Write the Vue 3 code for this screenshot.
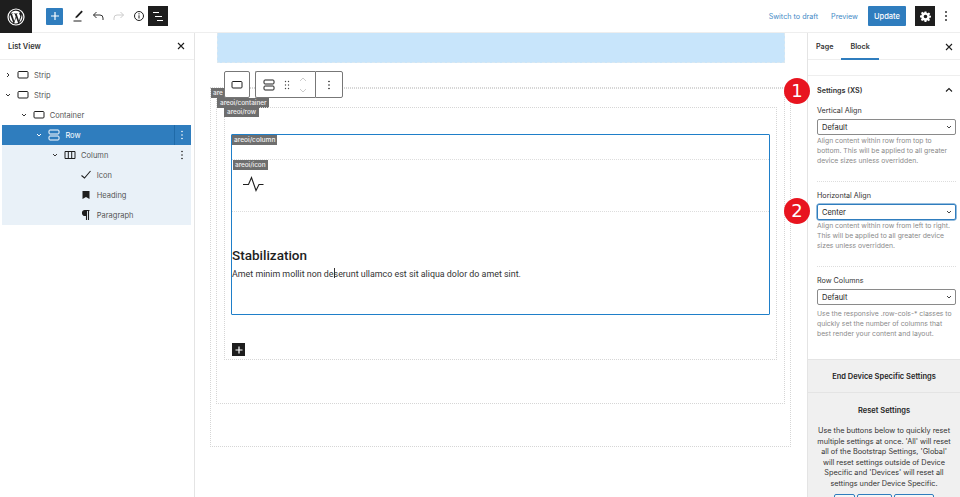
<script setup>
const tree = [
  { label: 'Strip', icon: 'box', depth: 0, caret: 'right' },
  { label: 'Strip', icon: 'box', depth: 0, caret: 'down' },
  { label: 'Container', icon: 'box', depth: 1, caret: 'down' },
  { label: 'Row', icon: 'row', depth: 2, caret: 'down', cls: 'sel', more: true },
  { label: 'Column', icon: 'col', depth: 3, caret: 'down', cls: 'tint', more: true },
  { label: 'Icon', icon: 'check', depth: 4, cls: 'tint' },
  { label: 'Heading', icon: 'mark', depth: 4, cls: 'tint' },
  { label: 'Paragraph', icon: 'para', depth: 4, cls: 'tint' }
]
</script>

<template>
  <div class="app">
    <header class="top">
      <div class="logo">
        <svg width="18" height="18" viewBox="0 0 18 18"><circle cx="9" cy="9" r="8" fill="none" stroke="#fff" stroke-width="1.2"/><path d="M2.6 9c0 2.6 1.5 4.8 3.7 5.8L3.2 6.4A6.4 6.4 0 0 0 2.600 9zM13.300 8.700c0-.8-.3-1.400-.5-1.800-.3-.5-.6-.9-.6-1.400 0-.5.4-1 1-1h.1A6.400 6.400 0 0 0 3.600 5.500h.4c.7 0 1.700-.1 1.700-.1.3 0 .4.500 0 .5 0 0-.3 0-.7.100l2.300 6.900 1.400-4.200-1-2.700c-.3 0-.7-.1-.7-.1-.3 0-.3-.5 0-.5 0 0 1 .1 1.700.1s1.700-.1 1.700-.1c.3 0 .4.500 0 .5 0 0-.3 0-.7.100l2.300 6.800.6-2.100c.3-.8.500-1.400.5-1.900zM9.100 9.600l-1.900 5.600a6.400 6.400 0 0 0 3.900-.1l-2-5.500zM14.600 6c.1.200.100.400.100.700 0 .6-.1 1.300-.5 2.200l-1.900 5.600A6.400 6.400 0 0 0 14.600 6z" fill="#fff"/></svg>
      </div>
      <div class="tools">
        <button class="add"><svg width="10" height="10" viewBox="0 0 10 10"><path d="M5 1v8M1 5h8" stroke="#fff" stroke-width="1.2"/></svg></button>
        <svg class="t-ic" width="12" height="14" viewBox="0 0 12 14"><path d="M9.500 1.500l1.300 1.300-5.500 5.700-2 .7.700-2z" fill="#1e1e1e"/><path d="M1.500 12h8" stroke="#1e1e1e" stroke-width="1"/></svg>
        <svg class="t-ic" width="12" height="10" viewBox="0 0 12 10"><path d="M4.500 1L1.500 4l3 3M1.500 4H8a3 3 0 0 1 3 3v2" fill="none" stroke="#333" stroke-width="1"/></svg>
        <svg class="t-ic" width="12" height="10" viewBox="0 0 12 10"><path d="M7.500 1l3 3-3 3M10.500 4H4a3 3 0 0 0-3 3v2" fill="none" stroke="#ccc" stroke-width="1"/></svg>
        <svg class="t-ic" width="12" height="12" viewBox="0 0 12 12"><circle cx="6" cy="6" r="4.500" fill="none" stroke="#1e1e1e" stroke-width="1"/><path d="M6 5.300v3.200M6 3.200v1.200" stroke="#1e1e1e" stroke-width="1"/></svg>
        <button class="listbtn"><svg width="12" height="11" viewBox="0 0 12 11"><path d="M1 1.500h6M3 5.500h7M5 9.500h6" stroke="#fff" stroke-width="1"/></svg></button>
      </div>
      <div class="actions">
        <a class="link l1">Switch to draft</a>
        <a class="link l2">Preview</a>
        <button class="update">Update</button>
        <button class="gear"><svg width="11" height="11" viewBox="0 0 24 24"><path fill="#fff" fill-rule="evenodd" d="M10 1h4l.7 3.200 1.900.8 2.800-1.800 2.800 2.800-1.800 2.800.8 1.900L24 10v4l-3.200.7-.8 1.900 1.800 2.800-2.800 2.800-2.800-1.800-1.900.8L14 24h-4l-.7-3.200-1.900-.8-2.800 1.800-2.800-2.800 1.800-2.800-.8-1.900L0 14v-4l3.200-.7.800-1.900-1.800-2.800 2.800-2.800 2.800 1.800 1.900-.8zM12 8a4 4 0 1 0 0 8 4 4 0 0 0 0-8z"/></svg></button>
        <svg class="kebab" width="4" height="12" viewBox="0 0 4 12"><circle cx="2" cy="2" r="1" fill="#333"/><circle cx="2" cy="6" r="1" fill="#333"/><circle cx="2" cy="10" r="1" fill="#333"/></svg>
      </div>
    </header>

    <div class="body">
      <aside class="list">
        <div class="list-head">
          <span>List View</span>
          <svg width="8" height="8" viewBox="0 0 8 8"><path d="M1 1l6 6M7 1L1 7" stroke="#1e1e1e" stroke-width="1.100"/></svg>
        </div>
        <div class="tree">
          <div v-for="(n, i) in tree" :key="i" class="node" :class="n.cls">
            <span class="indent" :style="{ width: n.depth * 15.7 + 'px' }"></span>
            <span class="caret">
              <svg v-if="n.caret === 'right'" width="6" height="6" viewBox="0 0 6 6"><path d="M2 1l2 2-2 2" fill="none" stroke="currentColor"/></svg>
              <svg v-else-if="n.caret === 'down'" width="6" height="6" viewBox="0 0 6 6"><path d="M1 2l2 2 2-2" fill="none" stroke="currentColor"/></svg>
            </span>
            <span class="ic">
              <svg v-if="n.icon === 'box'" width="12" height="10" viewBox="0 0 12 10"><rect x="1" y="1.500" width="10" height="6.500" rx="1" fill="none" stroke="currentColor"/></svg>
              <svg v-else-if="n.icon === 'row'" width="12" height="12" viewBox="0 0 12 12"><rect x="1" y="1" width="10" height="4" rx="1" fill="none" stroke="currentColor"/><rect x="1" y="7" width="10" height="4" rx="1" fill="none" stroke="currentColor"/></svg>
              <svg v-else-if="n.icon === 'col'" width="12" height="10" viewBox="0 0 12 10"><path d="M1 1.500h10v7H1zM4.300 1.500v7M7.700 1.500v7" fill="none" stroke="currentColor"/></svg>
              <svg v-else-if="n.icon === 'check'" width="12" height="10" viewBox="0 0 12 10"><path d="M1.500 5.500l3 2.500 6-7" fill="none" stroke="currentColor" stroke-width="1.100"/></svg>
              <svg v-else-if="n.icon === 'mark'" width="12" height="10" viewBox="0 0 12 10"><path d="M2.500 1h7v8L6 7 2.500 9z" fill="currentColor"/></svg>
              <svg v-else width="12" height="12" viewBox="0 0 12 12"><path d="M9.500 1.500H5a2.500 2.500 0 0 0 0 5h1.500M6.500 1.500v9.500M8.500 1.500v9.500" fill="none" stroke="currentColor" stroke-width="1.100"/><path d="M5 1.500a2.500 2.500 0 0 0 0 5h1.500v-5z" fill="currentColor"/></svg>
            </span>
            <span class="lbl">{{ n.label }}</span>
            <span v-if="n.more" class="more">
              <svg width="4" height="10" viewBox="0 0 4 10"><circle cx="2" cy="1.500" r=".8" fill="currentColor"/><circle cx="2" cy="5" r=".8" fill="currentColor"/><circle cx="2" cy="8.500" r=".8" fill="currentColor"/></svg>
            </span>
          </div>
        </div>
      </aside>

      <main class="canvas">
        <div class="hero-block"></div>
        <div class="strip">
          <div class="container">
            <span class="tag tag-strip">are</span>
            <span class="tag tag-container">areoi/container</span>
            <div class="row-block">
              <span class="tag tag-row">areoi/row</span>
              <div class="column">
                <span class="tag tag-col">areoi/column</span>
                <div class="icon-block">
                  <span class="tag tag-icon">areoi/icon</span>
                  <svg class="pulse" width="24" height="18" viewBox="0 0 24 18"><path d="M2 9.500h5.500L10.500 2.500l4.500 13 3-6h4.500" fill="none" stroke="#1e1e1e" stroke-width="1.100"/></svg>
                </div>
                <h2>Stabilization</h2>
                <p>Amet minim mollit non de<i class="cursor"></i>serunt ullamco est sit aliqua dolor do amet sint.</p>
              </div>
              <button class="inserter"><svg width="8" height="8" viewBox="0 0 8 8"><path d="M4 .5v7M.5 4h7" stroke="#fff" stroke-width="1.200"/></svg></button>
            </div>
          </div>
        </div>

        <div class="toolbar">
          <div class="tb-group tb-one">
            <svg width="12" height="10" viewBox="0 0 12 10"><rect x="1" y="1.500" width="10" height="6.500" rx="1" fill="none" stroke="#1e1e1e"/></svg>
          </div>
          <div class="tb-group tb-two">
            <svg width="12" height="12" viewBox="0 0 12 12"><rect x="1" y="1" width="10" height="4" rx="1" fill="none" stroke="#1e1e1e"/><rect x="1" y="7" width="10" height="4" rx="1" fill="none" stroke="#1e1e1e"/></svg>
            <svg width="6" height="10" viewBox="0 0 6 10"><g fill="#444"><circle cx="1.500" cy="1.500" r=".7"/><circle cx="4.500" cy="1.500" r=".7"/><circle cx="1.500" cy="5" r=".7"/><circle cx="4.500" cy="5" r=".7"/><circle cx="1.500" cy="8.500" r=".7"/><circle cx="4.500" cy="8.500" r=".7"/></g></svg>
            <svg width="8" height="18" viewBox="0 0 8 18"><path d="M1 5l3-3 3 3M1 13l3 3 3-3" fill="none" stroke="#ccc"/></svg>
          </div>
          <div class="tb-group tb-three">
            <svg width="4" height="10" viewBox="0 0 4 10"><circle cx="2" cy="1.500" r=".8" fill="#1e1e1e"/><circle cx="2" cy="5" r=".8" fill="#1e1e1e"/><circle cx="2" cy="8.500" r=".8" fill="#1e1e1e"/></svg>
          </div>
        </div>
        <span class="badge b1">1</span>
        <span class="badge b2">2</span>
      </main>

      <aside class="side">
        <div class="tabs">
          <span class="tab">Page</span>
          <span class="tab on">Block</span>
          <svg class="tab-x" width="8" height="8" viewBox="0 0 8 8"><path d="M1 1l6 6M7 1L1 7" stroke="#1e1e1e" stroke-width="1.100"/></svg>
        </div>
        <div class="panel">
          <div class="panel-head">
            <span>Settings (XS)</span>
            <svg width="8" height="6" viewBox="0 0 8 6"><path d="M1 4.500l3-3 3 3" fill="none" stroke="#1e1e1e" stroke-width="1.100"/></svg>
          </div>
          <div class="field">
            <label>Vertical Align</label>
            <div class="select"><span>Default</span><svg width="6" height="6" viewBox="0 0 6 6"><path d="M1 2l2 2 2-2" fill="none" stroke="#444"/></svg></div>
            <p class="help">Align content within row from top to bottom. This will be applied to all greater device sizes unless overridden.</p>
          </div>
          <div class="field dotted">
            <label>Horizontal Align</label>
            <div class="select focus"><span>Center</span><svg width="6" height="6" viewBox="0 0 6 6"><path d="M1 2l2 2 2-2" fill="none" stroke="#444"/></svg></div>
            <p class="help">Align content within row from left to right. This will be applied to all greater device sizes unless overridden.</p>
          </div>
          <div class="field dotted last">
            <label>Row Columns</label>
            <div class="select"><span>Default</span><svg width="6" height="6" viewBox="0 0 6 6"><path d="M1 2l2 2 2-2" fill="none" stroke="#444"/></svg></div>
            <p class="help">Use the responsive .row-cols-* classes to quickly set the number of columns that best render your content and layout.</p>
          </div>
        </div>
        <div class="gray end">End Device Specific Settings</div>
        <div class="gray reset">
          <strong>Reset Settings</strong>
          <p>Use the buttons below to quickly reset multiple settings at once. 'All' will reset all of the Bootstrap Settings, 'Global' will reset settings outside of Device Specific and 'Devices' will reset all settings under Device Specific.</p>
          <div class="reset-btns"><span class="w1"></span><span class="w2"></span><span class="w3"></span></div>
        </div>
      </aside>
    </div>
  </div>
</template>

<style>
html, body { margin: 0; overflow: hidden; background: #fff; }
</style>

<style scoped>
.app { width: 960px; height: 497px; overflow: hidden; display: flex; flex-direction: column; font-family: Inter, "Liberation Sans", sans-serif; color: #1e1e1e; background: #fff; }
button { border: 0; padding: 0; display: flex; align-items: center; justify-content: center; }
.top { height: 33px; flex: none; display: flex; align-items: center; border-bottom: 1px solid #eee; box-sizing: border-box; }
.logo { width: 32px; height: 33px; background: #1e1e1e; display: flex; align-items: center; justify-content: center; flex: none; align-self: flex-start; }
.tools { display: flex; align-items: center; margin-left: 14px; }
.add { width: 17px; height: 17px; background: #2f7dbe; border-radius: 1px; margin-right: 9px; }
.t-ic { margin-right: 8px; }
.t-ic:nth-of-type(2) { margin-right: 9px; }
.listbtn { width: 20px; height: 20px; background: #1e1e1e; margin-left: -5px; }
.actions { margin-left: auto; display: flex; align-items: center; }
.link { font-size: 7.200px; color: #3f8ac6; }
.l1 { margin-right: 13px; }
.l2 { margin-right: 10px; }
.update { width: 38px; height: 20px; background: #2f7dbe; color: #fff; font: 500 7.500px Inter, sans-serif; border-radius: 1px; margin-right: 9px; }
.gear { width: 20px; height: 20px; background: #1e1e1e; margin-right: 9px; }
.kebab { margin-right: 12px; }
.body { flex: 1; display: flex; min-height: 0; }
.list { width: 195px; flex: none; box-sizing: border-box; border-right: 1px solid #e4e4e4; }
.list-head { height: 27px; box-sizing: border-box; display: flex; align-items: center; justify-content: space-between; padding: 0 9px 0 8px; border-bottom: 1px solid #eee; font-size: 7.500px; font-weight: 600; color: #333; }
.tree { padding: 5px 3px 0 2px; }
.node { height: 20px; display: flex; align-items: center; font-size: 7.500px; color: #555; padding-left: 1px; }
.node .indent { flex: none; }
.caret { width: 10px; display: flex; align-items: center; justify-content: center; margin-right: 4px; flex: none; color: #333; }
.ic { width: 12px; margin-right: 5px; display: flex; align-items: center; justify-content: center; color: #1e1e1e; flex: none; }
.lbl { flex: 1; }
.more { width: 15px; margin-right: 2px; height: 20px; display: flex; align-items: center; justify-content: center; color: #1e1e1e; border-left: 1px solid transparent; flex: none; box-sizing: border-box; }
.node.sel { background: #2f7dbe; color: #fff; }
.node.sel .caret, .node.sel .ic, .node.sel .more { color: #fff; }
.node.sel .more { border-left-color: #1f6aa8; }
.node.tint { background: #e9f1f8; }
.canvas { flex: 1; position: relative; min-width: 0; padding-left: 15px; padding-right: 16px; }
.hero-block { height: 30px; margin: 0 6px 0 7px; background: #c8e5fb; border: 1px dashed #dbe8f0; border-top: 0; box-sizing: border-box; }
.strip { margin-top: 24px; height: 360px; box-sizing: border-box; border: 1px dotted #d6d6d6; padding: 0 5px; }
.container { position: relative; height: 316px; box-sizing: border-box; border: 1px dotted #d6d6d6; padding: 18px 7px 0; }
.row-block { position: relative; height: 253px; box-sizing: border-box; border: 1px dotted #d6d6d6; padding: 26px 6px 0; }
.column { position: relative; height: 181px; box-sizing: border-box; border: 1px solid #1f7fc9; border-radius: 1px; padding-top: 24px; }
.icon-block { position: relative; height: 53px; box-sizing: border-box; border-top: 1px dotted #ddd; border-bottom: 1px dotted #ddd; }
.pulse { position: absolute; left: 9px; top: 15px; }
.tag { position: absolute; height: 10px; line-height: 10px; background: #6e6e6e; color: #f2f2f2; font-size: 6.400px; font-weight: 500; padding: 0 2px; white-space: nowrap; }
.tag-strip { left: -6px; top: -1px; width: 16px; box-sizing: border-box; overflow: hidden; }
.tag-container { left: 0; top: 9px; padding: 0 3px; }
.tag-row { left: -1px; top: -1px; padding: 0 3px; }
.tag-col { left: 0; top: 0; padding: 0 2px; font-size: 6.600px; }
.tag-icon { left: 1px; top: 0; }
.column h2 { margin: 33px 0 0; font: 500 13.500px/20px Roboto, sans-serif; color: #1e1e1e; }
.column p { margin: 3px 0 0; font: 400 8.900px/13px Roboto, sans-serif; color: #333; position: relative; }
.cursor { display: inline-block; width: 1px; height: 10px; background: #333; margin-right: -1px; vertical-align: -1px; }
.inserter { position: absolute; left: 7px; top: 235px; width: 13px; height: 13px; background: #1e1e1e; }
.toolbar { position: absolute; left: 29px; top: 38px; display: flex; gap: 5px; }
.tb-group { height: 27px; box-sizing: border-box; background: #fff; border: 1px solid #777; border-radius: 2px; display: flex; align-items: center; }
.tb-one { width: 26px; justify-content: center; }
.tb-two { width: 60px; padding-left: 7px; gap: 9px; border-right: 0; border-radius: 2px 0 0 2px; }
.tb-three { width: 28px; justify-content: center; margin-left: -5px; border-radius: 0 2px 2px 0; }
.badge { position: absolute; width: 26px; height: 26px; border-radius: 50%; background: #e8141f; color: #fff; font: 400 18px/26px "DejaVu Sans", sans-serif; text-align: center; }
.b1 { left: 589px; top: 45px; }
.b2 { left: 589px; top: 165px; }
.side { width: 153px; flex: none; box-sizing: border-box; border-left: 1px solid #e4e4e4; }
.tabs { height: 27px; box-sizing: border-box; display: flex; align-items: center; border-bottom: 1px solid #eee; padding: 0 8px; position: relative; font-size: 7.200px; font-weight: 600; color: #333; }
.tab { height: 26px; display: flex; align-items: center; }
.tab.on { margin-left: 17px; position: relative; }
.tab.on::after { content: ""; position: absolute; left: -9px; right: -9px; bottom: -1px; height: 2px; background: #2f7dbe; }
.tab-x { position: absolute; right: 7px; top: 10px; }
.panel { margin-top: 15px; border-top: 1px solid #eee; padding: 8px 4px 0 9px; height: 284px; box-sizing: border-box; }
.panel-head { display: flex; align-items: center; justify-content: space-between; height: 12px; font-size: 7.200px; font-weight: 600; color: #333; padding-right: 3px; margin-bottom: 9px; }
.field label { display: block; font-size: 7.200px; line-height: 10px; color: #333; padding-top: 1px; margin-bottom: 3px; }
.select { border: 1px solid #8a8a8a; border-radius: 2px; display: flex; align-items: center; justify-content: space-between; padding: 0 3px 0 4px; font-size: 7.500px; box-sizing: content-box; height: 14px; }
.select.focus { border-color: #2f7dbe; box-shadow: 0 0 0 .5px #2f7dbe; }
.help { margin: 1px 0 0; font-size: 6.800px; line-height: 10px; color: #8a8a8a; }
.last .help { margin-top: 4px; }
.field { padding-bottom: 15px; }
.dotted { border-top: 1px dotted #ddd; padding-top: 8px; }
.last { padding-bottom: 0; }
.gray { background: #f0f0f0; text-align: center; box-sizing: border-box; font-size: 7.500px; }
.end { height: 34px; line-height: 33px; font-weight: 600; border-top: 1px solid #e4e4e4; border-bottom: 1px solid #e4e4e4; }
.reset { padding: 12px 8px 0; height: 110px; }
.reset strong { display: block; font-weight: 600; line-height: 11px; }
.reset p { margin: 10px 0 0; font-size: 7.300px; line-height: 10.600px; color: #333; }
.reset-btns { display: flex; justify-content: center; gap: 2px; margin-top: 4px; }
.reset-btns span { height: 8px; border: 1px solid #2f7dbe; border-radius: 2px; background: #f6f6f6; }
.w1 { width: 19px; }
.w2 { width: 33px; }
.w3 { width: 38px; }
</style>
